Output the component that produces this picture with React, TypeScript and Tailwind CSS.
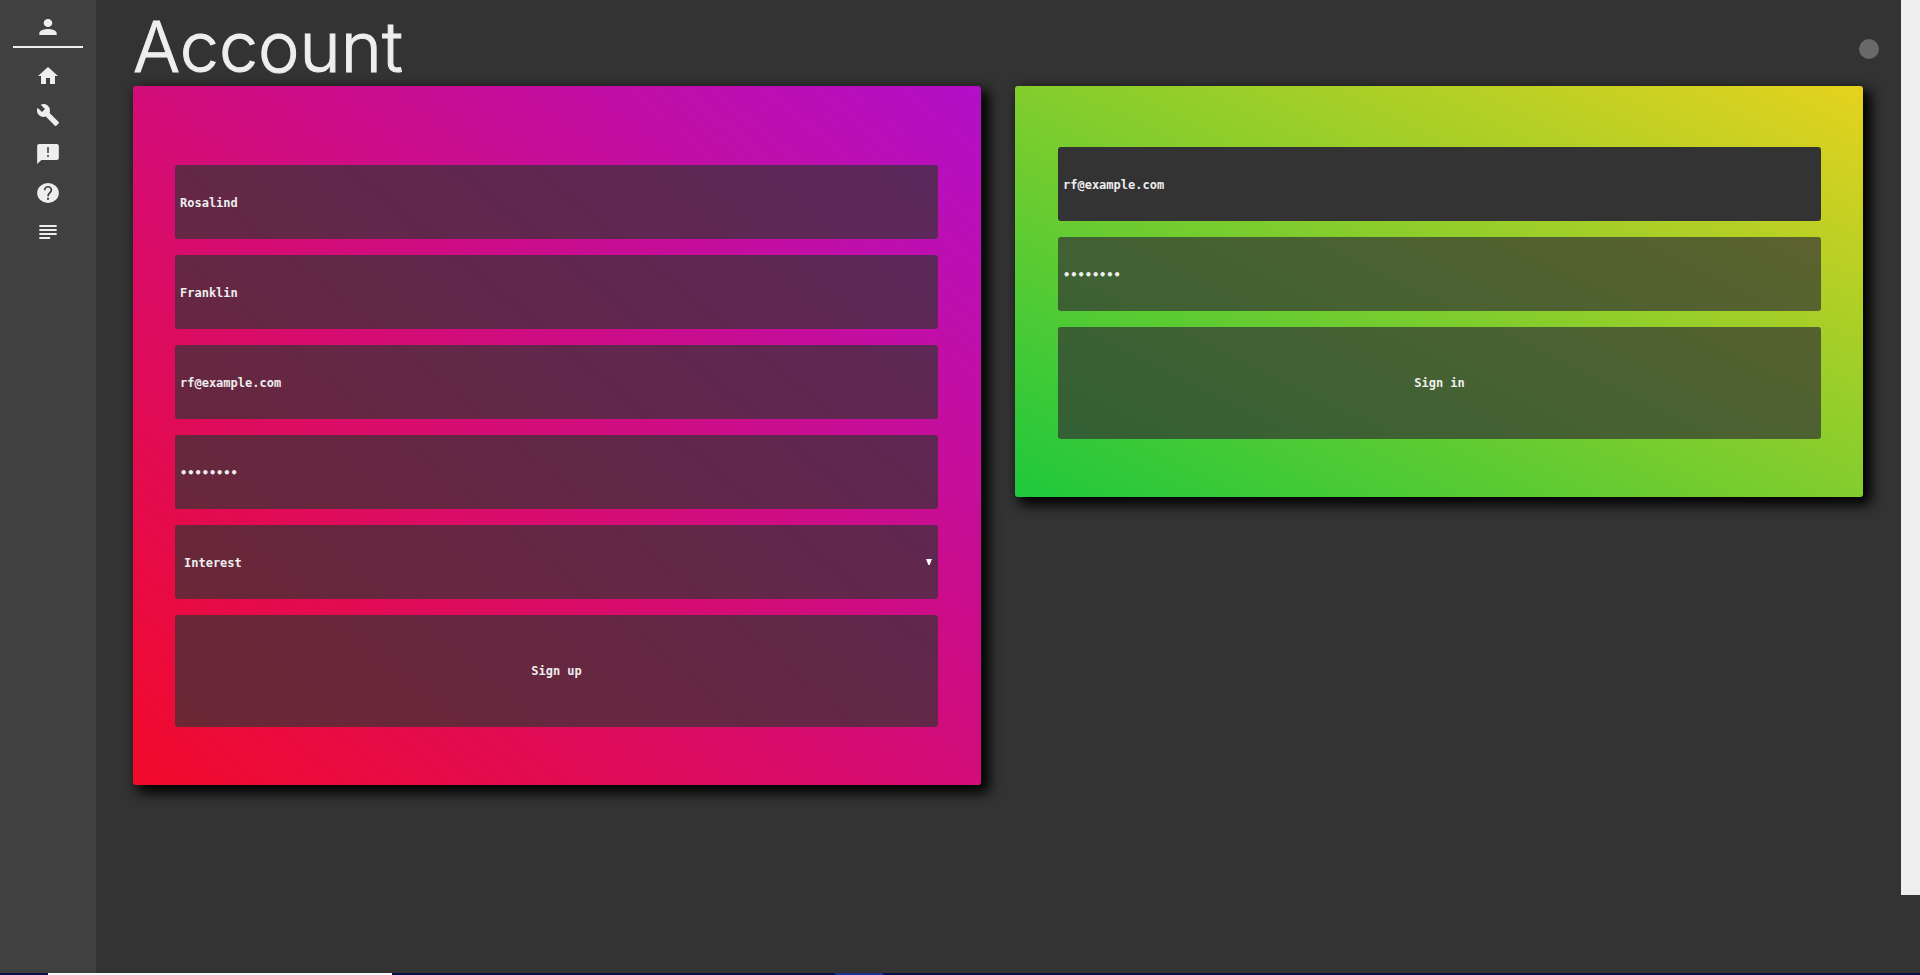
import React from "react";
import { MdBuild, MdHome, MdPerson, MdSubject } from "react-icons/md";

function FeedbackIcon() {
  return (
    <svg width="26" height="24" viewBox="0 0 24 24" preserveAspectRatio="none" fill="currentColor">
      <path d="M20 2H4c-1.1 0-2 .9-2 2v18l4-4h14c1.1 0 2-.9 2-2V4c0-1.1-.9-2-2-2z" />
      <path d="M11.1 5h1.8v6h-1.8zM11.1 13h1.8v2h-1.8z" fill="#606060" />
    </svg>
  );
}

function HelpIcon() {
  return (
    <svg width="26" height="24" viewBox="0 0 24 24" preserveAspectRatio="none">
      <circle cx="12" cy="12" r="10" fill="currentColor" />
      <path d="M8.9 9.2a3.1 3.4 0 0 1 6.2 0c0 2.4-3.1 2.7-3.1 6" fill="none" stroke="#404040" strokeWidth="1.6" />
      <path d="M11.1 16.8h1.8v2h-1.8z" fill="#404040" />
    </svg>
  );
}

const links = [
  { label: "Home", icon: <MdHome size={24} /> },
  { label: "Tools", icon: <MdBuild size={24} /> },
  { label: "Feedback", icon: <FeedbackIcon /> },
  { label: "Help", icon: <HelpIcon /> },
  { label: "Articles", icon: <MdSubject className="h-6 w-[26px]" preserveAspectRatio="none" /> },
];

const box =
  "block w-full rounded-[3px] bg-[#333]/70 font-['DejaVu_Sans_Mono',monospace] text-[12px] font-bold text-[#eee] outline-none focus:bg-[#333]";
const field = `${box} h-[74px] px-[5px] pt-[2px]`;
const card = "flex flex-col gap-4 rounded-[3px] pb-[58px] shadow-[6px_6px_13px_2px_#000]";

function Field({ label, type = "text", value, className = "" }: { label: string; type?: string; value: string; className?: string }) {
  return <input aria-label={label} type={type} defaultValue={value} autoComplete="off" className={`${field} ${className}`} />;
}

export default function App() {
  return (
    <div className="flex h-screen flex-col bg-[#333] text-[#eee]">
      <div className="flex min-h-0 flex-1">
        <nav aria-label="Main" className="flex w-24 shrink-0 flex-col items-center bg-[#404040] pt-[15px]">
          <a href="#account" aria-label="Account" className="flex w-[70px] justify-center border-b-2 border-[#eee] pb-[7px]">
            <MdPerson className="h-6 w-[26px]" preserveAspectRatio="none" />
          </a>
          <div className="flex flex-col items-center gap-[15px] pt-4">
            {links.map(({ label, icon }) => (
              <a key={label} href={`#${label.toLowerCase()}`} aria-label={label} className="flex h-6 items-center">
                {icon}
              </a>
            ))}
          </div>
        </nav>
        <main className="min-w-0 flex-1 pr-[38px] pl-[37px]">
          <header className="flex h-[86px] items-center justify-between pt-3">
            <h1 className="pb-[5px] font-['Inter',sans-serif] text-[70px] leading-none font-light [-webkit-text-stroke:1px_#eee]">Account</h1>
            <button type="button" aria-label="Status" className="-mr-4 size-5 rounded-full bg-[#696969]" />
          </header>
          <div className="grid grid-cols-2 items-start gap-[34px]">
            <form className={`${card} bg-[linear-gradient(to_top_right,#f20a2a,#b30fc8)] pt-[79px] pr-[43px] pl-[42px]`}>
              <Field label="First name" value="Rosalind" />
              <Field label="Last name" value="Franklin" />
              <Field label="Email" type="email" value="rf@example.com" />
              <Field label="Password" type="password" value="password" />
              <div className="relative">
                <select aria-label="Interest" className={`${box} h-[74px] appearance-none px-[9px] pt-[2px]`}>
                  <option>Interest</option>
                </select>
                <svg className="pointer-events-none absolute top-[34px] right-[6px]" width="6" height="6" viewBox="0 0 6 6" fill="#fff">
                  <path d="M0 0h6L3.6 6H2.4z" />
                </svg>
              </div>
              <button type="button" className={`${box} h-[112px]`}>Sign up</button>
            </form>
            <form className={`${card} bg-[linear-gradient(to_top_right,#1ec83c,#e6d21e)] pt-[61px] pr-[42px] pl-[43px]`}>
              <Field label="Sign in email" type="email" value="rf@example.com" className="bg-[#333]!" />
              <Field label="Sign in password" type="password" value="password" />
              <button type="button" className={`${box} h-[112px]`}>Sign in</button>
            </form>
          </div>
        </main>
        <div className="h-[92%] w-[19px] shrink-0 bg-[#eee]" />
      </div>
      <div className="flex h-[2px] shrink-0 bg-[#06104a]">
        <div className="ml-12 w-[344px] bg-[#f8f8fa]" />
        <div className="ml-[443px] w-12 bg-[#1e2f96]" />
      </div>
    </div>
  );
}
